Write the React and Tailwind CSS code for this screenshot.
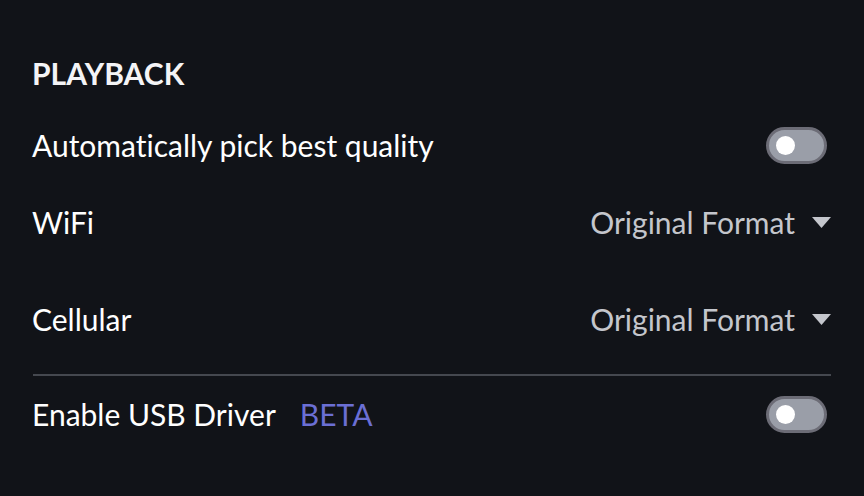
export default function App() {
  const Toggle = () => (
    <div className="w-[61px] h-[37px] rounded-full bg-[#9a9ea8] border-[3px] border-[#6c6c76] flex items-center pl-[7px]">
      <div className="w-[19px] h-[19px] rounded-full bg-white" />
    </div>
  );
  const Drop = () => (
    <div className="flex items-center gap-[17px] text-[#c4c6cc]">
      <span>Original Format</span>
      <svg width="19" height="11" viewBox="0 0 19 11"><path d="M0 0H19L9.5 11Z" fill="#c4c6cc" /></svg>
    </div>
  );
  return (
    <div className="w-[864px] h-[496px] bg-[#111318] text-white pl-[32px] pr-[33px] pt-[56px] [font-variant-ligatures:none]" style={{ fontFamily: "Lato, sans-serif" }}>
      <div className="text-[30px] font-bold leading-[34px] text-[#f4f4f6]">PLAYBACK</div>
      <div className="text-[30px] leading-[34px]">
        <div className="flex items-center justify-between h-[50px] mt-[30px] pr-[4px]">
          <span>Automatically pick best quality</span>
          <Toggle />
        </div>
        <div className="flex items-center justify-between h-[50px] mt-[27px]">
          <span>WiFi</span>
          <Drop />
        </div>
        <div className="flex items-center justify-between h-[50px] mt-[47px]">
          <span>Cellular</span>
          <Drop />
        </div>
        <div className="h-[2px] bg-[#45484f] mt-[30px] ml-[1px]" />
        <div className="flex items-center justify-between h-[50px] mt-[13px] pr-[4px]">
          <span>Enable USB Driver<span className="ml-[24px] text-[#6b6fd4]">BETA</span></span>
          <Toggle />
        </div>
      </div>
    </div>
  );
}
